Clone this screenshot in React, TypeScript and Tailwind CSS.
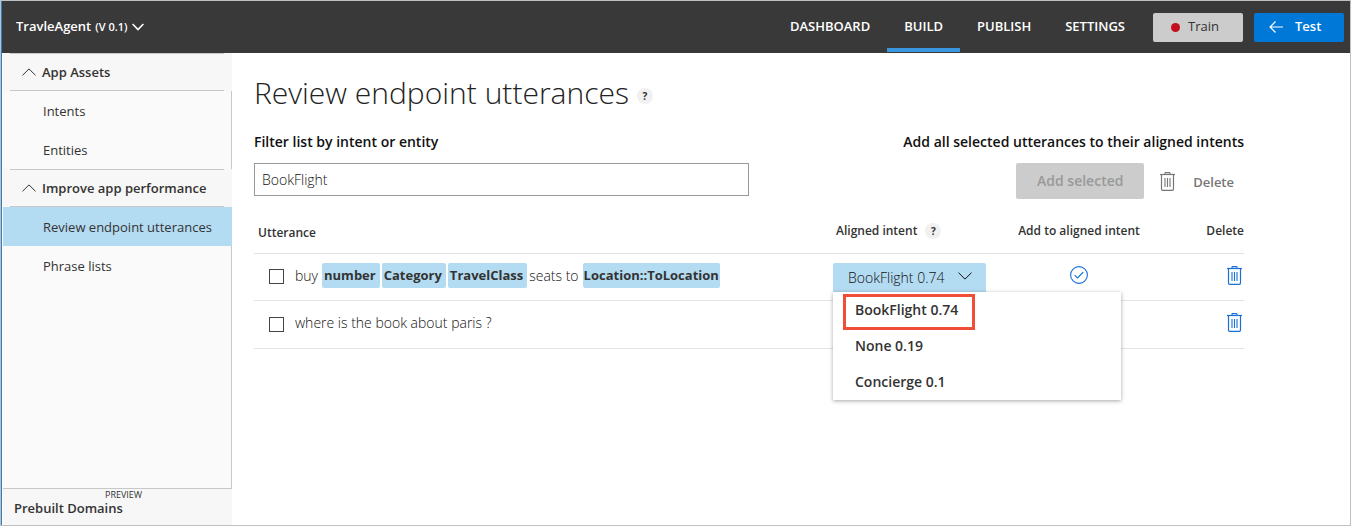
import { useState } from "react";

type Token = { text: string; entity?: boolean };
type Row = { id: string; label: string; tokens: Token[]; menu: boolean };

const rows: Row[] = [
  {
    id: "utterance-1",
    label: "buy number Category TravelClass seats to Location::ToLocation",
    menu: true,
    tokens: [
      { text: "buy" },
      { text: "number", entity: true },
      { text: "Category", entity: true },
      { text: "TravelClass", entity: true },
      { text: "seats to" },
      { text: "Location::ToLocation", entity: true },
    ],
  },
  {
    id: "utterance-2",
    label: "where is the book about paris ?",
    menu: false,
    tokens: [{ text: "where is the book about paris ?" }],
  },
];

const intents = ["BookFlight 0.74", "None 0.19", "Concierge 0.1"];

function Chevron({ up = false, className = "" }: { up?: boolean; className?: string }) {
  return (
    <svg viewBox="0 0 14 8" className={className} fill="none" stroke="currentColor" aria-hidden="true">
      <path d={up ? "M0.5 7.3 7 0.9 13.5 7.3" : "M0.5 0.7 7 7.1 13.5 0.7"} />
    </svg>
  );
}

function Trash({ className }: { className: string }) {
  return (
    <svg viewBox="0 0 15 19" className={className} fill="none" stroke="currentColor" aria-hidden="true">
      <path d="M0 2.5H15" strokeWidth="1.2" />
      <path d="M5 2.5V1.2Q5 0.6 5.6 0.6H9.4Q10 0.6 10 1.2V2.5" strokeWidth="1.1" />
      <path d="M1.5 3V17Q1.5 18.3 2.8 18.3H12.2Q13.5 18.3 13.5 17V3" strokeWidth="1.2" />
      <path d="M5 6V15M7.5 6V15M10 6V15" strokeWidth="1.1" />
    </svg>
  );
}

function CheckCircle() {
  return (
    <svg viewBox="0 0 18 18" className="size-[18px]" fill="none" stroke="currentColor" aria-hidden="true">
      <circle cx="9" cy="9" r="8.4" strokeWidth="1.1" />
      <path d="M4.6 9.2 7.5 12 13.3 6" strokeWidth="1.1" />
    </svg>
  );
}

function Help({ label }: { label: string }) {
  return (
    <button
      type="button"
      aria-label={label}
      className="flex size-4 items-center justify-center rounded-full bg-[#f1f1f1] text-[10px] leading-4 font-bold text-[#333]"
    >
      ?
    </button>
  );
}

function Section({ title, items, active }: { title: string; items: string[]; active?: string }) {
  return (
    <section>
      <div className="bg-[#f7f7f7] pr-2 pl-[7px]">
        <button
          type="button"
          aria-expanded="true"
          className="flex h-[38px] w-full items-center gap-1.5 border-y border-[#c8c8c8] pt-0.5 pl-3 text-[13px] font-semibold text-[#333]"
        >
          <Chevron up className="mb-0.5 h-2 w-3.5" />
          {title}
        </button>
      </div>
      <ul>
        {items.map((item) => (
          <li key={item}>
            <a
              href="#"
              className={
                item === active
                  ? "flex h-[39px] items-center bg-[#b3dbf2] pt-0.5 pl-10"
                  : "flex h-[39px] items-center border-r border-[#c8c8c8] pt-0.5 pl-10"
              }
            >
              {item}
            </a>
          </li>
        ))}
      </ul>
    </section>
  );
}

function IntentPicker() {
  const [open, setOpen] = useState(true);
  const [value, setValue] = useState(intents[0]);
  return (
    <div className="relative w-[153px]">
      <button
        type="button"
        aria-haspopup="listbox"
        aria-expanded={open}
        onClick={() => setOpen(!open)}
        className="flex h-[29px] w-full items-center justify-between rounded-t-xs bg-[#b3dbf2] pr-3.5 pl-[15px] text-sm font-light text-[#111]"
      >
        {value}
        <Chevron className="mb-1 h-2 w-3.5" />
      </button>
      {open && (
        <ul
          role="listbox"
          aria-label="Aligned intent"
          className="absolute top-full left-0 z-10 w-72 bg-white text-sm font-semibold text-[#333] shadow-[0_1px_4px_rgba(0,0,0,0.35)]"
        >
          {intents.map((intent) => (
            <li key={intent} role="option" aria-selected={intent === value} className="h-9 pl-2.5">
              <button
                type="button"
                onClick={() => setValue(intent)}
                className={
                  intent === value
                    ? "relative top-0.5 flex h-9 w-[132px] items-center border-3 border-[#f04e37] pb-1 pl-[9px] whitespace-nowrap"
                    : "flex h-9 w-full items-center pl-3"
                }
              >
                {intent}
              </button>
            </li>
          ))}
        </ul>
      )}
    </div>
  );
}

export default function App() {
  return (
    <div className="flex min-h-screen border border-[#c0c0c0] bg-white font-['Open_Sans','Noto_Sans',sans-serif] text-[13px] text-[#333]">
      <div className="flex grow flex-col border-l border-[#2f7fc4]">
        <header className="flex h-[52px] items-center justify-between bg-[#393939] pr-1.5 pl-3.5 text-white">
          <button type="button" className="flex items-center gap-1 text-[13px] font-semibold">
            TravleAgent <span className="text-[11px] font-semibold">(V 0.1)</span>
            <svg viewBox="0 0 12 8" className="h-2 w-3" fill="none" stroke="currentColor" aria-hidden="true">
              <path d="M0.6 1 6 6.6 11.4 1" strokeWidth="1.5" />
            </svg>
          </button>
          <div className="flex h-full items-center">
            <nav className="mr-[11px] flex h-full font-semibold">
              {["DASHBOARD", "BUILD", "PUBLISH", "SETTINGS"].map((tab) => (
                <a
                  key={tab}
                  href="#"
                  className={
                    tab === "BUILD"
                      ? "mb-px flex items-center border-b-4 border-[#3a96dd] px-[17px] pt-1"
                      : "flex items-center px-[17px]"
                  }
                >
                  {tab}
                </a>
              ))}
            </nav>
            <div className="flex gap-[11px]">
              <button
                type="button"
                className="flex h-[29px] w-[90px] items-center gap-2 rounded-xs bg-[#ccc] pl-[18px] text-[#333]"
              >
                <span className="size-[9px] rounded-full bg-[#c50f1f]" />
                Train
              </button>
              <button
                type="button"
                className="flex h-[29px] w-[90px] items-center gap-3 rounded-xs bg-[#0078d7] pl-[15px] font-semibold"
              >
                <svg viewBox="0 0 14 12" className="h-3 w-3.5" fill="none" stroke="currentColor" aria-hidden="true">
                  <path d="M14 6H1M6.5 0.5 1 6 6.5 11.5" strokeWidth="1.2" />
                </svg>
                Test
              </button>
            </div>
          </div>
        </header>

        <div className="flex grow">
          <aside className="ml-px flex w-[229px] shrink-0 flex-col bg-[#fafafa]">
            <Section title="App Assets" items={["Intents", "Entities"]} />
            <Section
              title="Improve app performance"
              items={["Review endpoint utterances", "Phrase lists"]}
              active="Review endpoint utterances"
            />
            <div className="grow border-r border-b border-[#c8c8c8]" />
            <a href="#" className="flex h-9 flex-col bg-[#f7f7f7] pl-[11px] font-semibold text-[#333]">
              <span className="pl-[91px] text-[9px] leading-3 font-normal">PREVIEW</span>
              <span className="leading-[14px]">Prebuilt Domains</span>
            </a>
          </aside>

          <main className="grow pr-[106px] pl-[22px]">
            <div className="flex h-20 items-center gap-2">
              <h1 className="text-[30px] leading-10 font-light text-[#222]">Review endpoint utterances</h1>
              <div className="pt-1.5">
                <Help label="Help about reviewing utterances" />
              </div>
            </div>
            <div className="flex h-[30px] items-start justify-between text-sm font-semibold text-[#111]">
              <label htmlFor="filter" className="leading-[18px]">
                Filter list by intent or entity
              </label>
              <p className="leading-[18px]">Add all selected utterances to their aligned intents</p>
            </div>
            <div className="flex items-start justify-between">
              <input
                id="filter"
                type="text"
                defaultValue="BookFlight"
                className="h-[33px] w-1/2 border border-[#999] px-[7px] text-sm font-light text-[#111] outline-none"
              />
              <div className="flex items-center pr-2.5">
                <button
                  type="button"
                  disabled
                  className="h-9 w-32 rounded-xs bg-[#ccc] text-sm font-semibold text-[#999]"
                >
                  Add selected
                </button>
                <button
                  type="button"
                  className="ml-4 flex items-center gap-[18px] pt-1 text-[13px] font-semibold text-[#767676]"
                >
                  <Trash className="mb-1 h-[19px] w-[15px]" />
                  Delete
                </button>
              </div>
            </div>

            <table className="w-full table-fixed text-left">
              <colgroup>
                <col />
                <col className="w-[183px]" />
                <col className="w-[126px]" />
                <col className="w-[102px]" />
              </colgroup>
              <thead>
                <tr className="h-[54px] border-b border-[#e3e3e3] text-xs text-[#333]">
                  <th className="pt-3.5 pl-1 font-semibold">Utterance</th>
                  <th className="pt-2.5 pl-[3px] font-semibold">
                    <div className="flex items-center gap-2">
                      Aligned intent
                      <Help label="Help about aligned intent" />
                    </div>
                  </th>
                  <th className="pt-2.5 text-center font-semibold whitespace-nowrap">Add to aligned intent</th>
                  <th className="pt-2.5 text-right font-semibold">Delete</th>
                </tr>
              </thead>
              <tbody>
                {rows.map((row) => (
                  <tr key={row.id} className="h-[47px] border-b border-[#e3e3e3] last:h-12">
                    <td className="pl-[15px]">
                      <div className="flex items-center gap-[11px]">
                        <input
                          type="checkbox"
                          id={row.id}
                          className="size-[15px] shrink-0 appearance-none border border-[#444] checked:bg-[#0078d7]"
                        />
                        <label htmlFor={row.id} className="flex items-center pb-0.5 text-sm font-light text-[#111]">
                          {row.tokens.map((token, index) =>
                            token.entity ? (
                              <span
                                key={token.text}
                                className="ml-0.5 rounded-xs bg-[#b3dbf2] pr-1 pl-0.5 text-[13px] leading-[25px] font-bold text-[#333] last:px-px"
                              >
                                {token.text}
                              </span>
                            ) : (
                              <span key={token.text} className={index > 0 ? "mx-0.5" : "mr-0.5"}>
                                {token.text}
                              </span>
                            ),
                          )}
                        </label>
                      </div>
                    </td>
                    <td className="pt-0.5">{row.menu && <IntentPicker />}</td>
                    <td className="pb-1 text-center">
                      <button type="button" aria-label="Add to aligned intent" className="align-middle text-[#1a6fd8]">
                        <CheckCircle />
                      </button>
                    </td>
                    <td className="pr-0.5 pb-1 text-right">
                      <button type="button" aria-label={`Delete ${row.label}`} className="align-middle text-[#1a6fd8]">
                        <Trash className="h-[19px] w-[15px]" />
                      </button>
                    </td>
                  </tr>
                ))}
              </tbody>
            </table>
          </main>
        </div>
      </div>
    </div>
  );
}
